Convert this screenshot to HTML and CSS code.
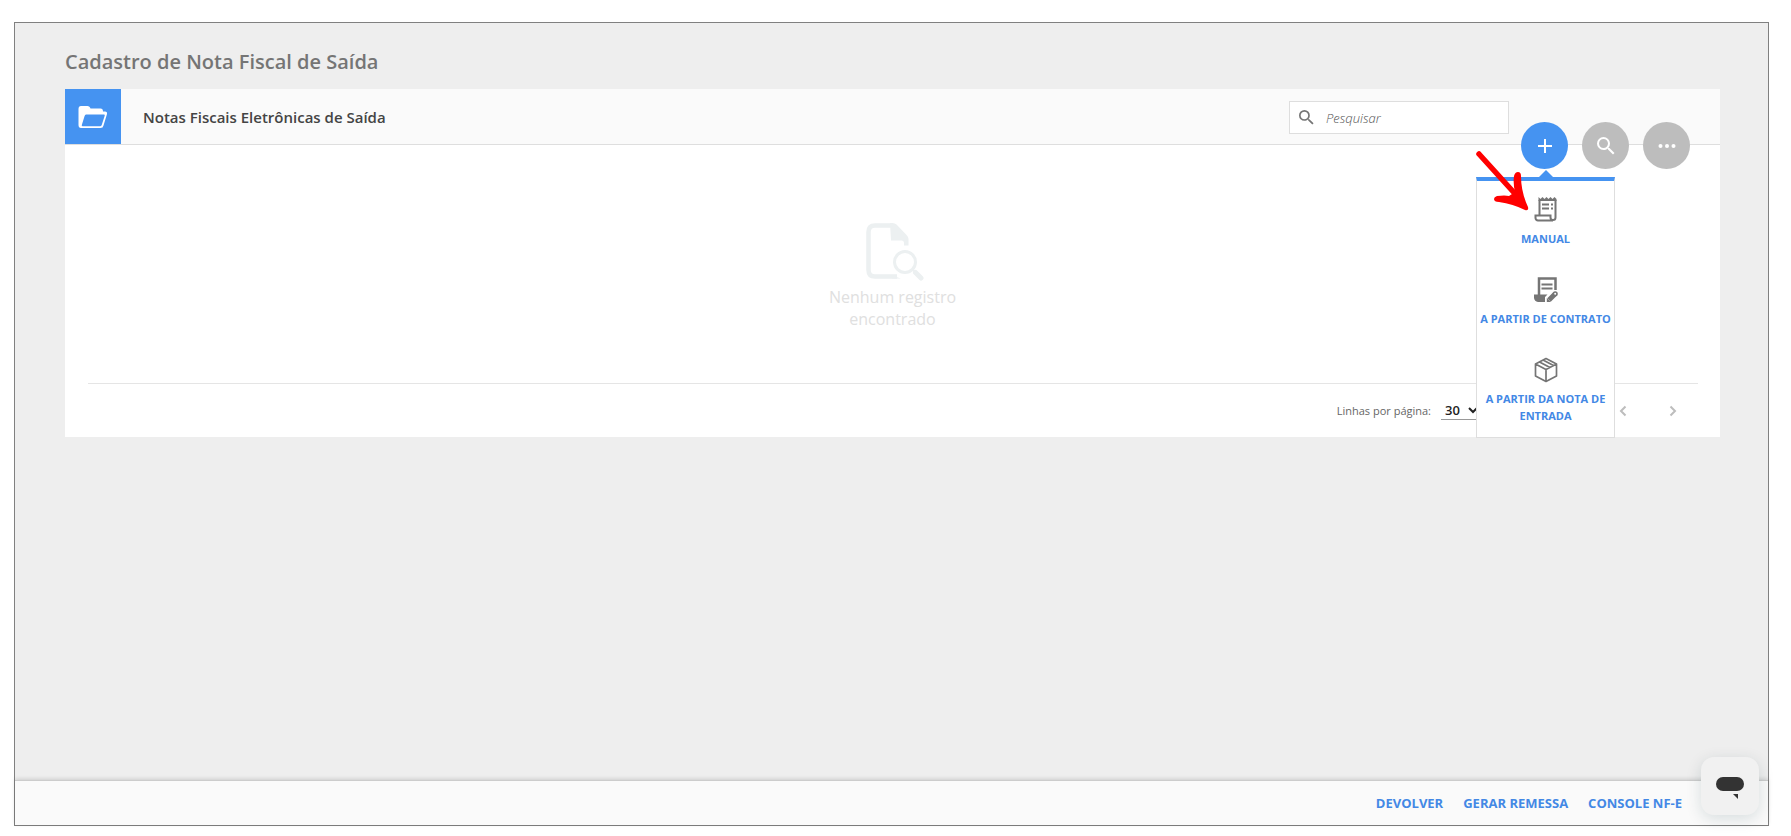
FILE: index.html
```html
<!DOCTYPE html>
<html lang="pt-BR">
<head>
<meta charset="utf-8">
<meta name="viewport" content="width=device-width, initial-scale=1">
<title>Cadastro de Nota Fiscal de Saída</title>
<link rel="stylesheet" href="styles.css">
</head>
<body>
<div class="app">
  <main class="content">
    <h1 class="page-title">Cadastro de Nota Fiscal de Saída</h1>
    <section class="card">
      <header class="card-header">
        <span class="card-icon">
          <svg width="30" height="24" viewBox="0 0 30 24" aria-hidden="true"><path fill="#fff" fill-rule="evenodd" d="M3 1h6.500q2 0 2.500 1.500l.5 1h10q2.500 0 2.500 3h2q2.500 0 2 2.500l-3.500 11.500Q25 23 22.500 23H3q-2.500 0-2.500-3V4Q.5 1 3 1zM8 9.500Q7 9.500 6.600 11L3.800 20q-.3 1.200.8 1.200h17.400q1.300 0 1.700-1.200l3-9.300q.4-1.200-.8-1.200z"/></svg>
        </span>
        <h2 class="card-title">Notas Fiscais Eletrônicas de Saída</h2>
        <div class="search">
          <svg width="15" height="15" viewBox="3 3 18 18" aria-hidden="true"><path fill="#757575" d="M15.500 14h-.79l-.28-.27A6.470 6.470 0 0 0 16 9.500 6.500 6.500 0 1 0 9.500 16c1.610 0 3.090-.59 4.230-1.570l.27.28v.79l5 4.990L20.490 19l-4.990-5zm-6 0C7.010 14 5 11.990 5 9.500S7.010 5 9.500 5 14 7.010 14 9.500 11.990 14 9.500 14z"/></svg>
          <input class="search-input" type="text" placeholder="Pesquisar" aria-label="Pesquisar">
        </div>
      </header>
      <div class="empty">
        <svg width="58" height="58" viewBox="0 0 58 58" aria-hidden="true"><path d="M31 53.500H9q-6.500 0-6.500-6.500V9Q2.500 2.500 9 2.500h17" fill="none" stroke="#ecf0f1" stroke-width="4.500"/><path fill="#ecf0f1" d="M24 0h2.500q2.500 0 4 1.500L40.500 12q2 2 2 4v6.500H38V20q0-2.500-2.500-2.500H25zM27 52q3 2.500 8 3.500h-9z"/><circle cx="39" cy="39" r="10.500" fill="none" stroke="#ecf0f1" stroke-width="3"/><path d="M46.500 46.500l4 4" stroke="#ecf0f1" stroke-width="2"/><path d="M49.500 49.500L55 55" stroke="#ecf0f1" stroke-width="5" stroke-linecap="round"/></svg>
        <p class="empty-text">Nenhum registro encontrado</p>
      </div>
      <footer class="pager">
        <label class="pager-label" for="rows">Linhas por página:</label>
        <select class="pager-select" id="rows"><option>30</option></select>
        <div class="pager-nav">
          <button class="nav-btn" type="button" aria-label="Página anterior"><svg width="8" height="12" viewBox="0 0 8 12"><path d="M6.500 1.500L2 6l4.500 4.500"/></svg></button>
          <button class="nav-btn" type="button" aria-label="Próxima página"><svg width="8" height="12" viewBox="0 0 8 12"><path d="M1.500 1.500L6 6l-4.500 4.500"/></svg></button>
        </div>
      </footer>
      <div class="actions">
        <div class="action-add">
          <button class="round primary" type="button" aria-label="Adicionar"><svg width="16" height="16" viewBox="0 0 16 16"><path d="M8 1v14M1 8h14" stroke="#fff" stroke-width="2"/></svg></button>
          <nav class="menu" aria-label="Adicionar">
            <a class="menu-item" href="#manual">
              <svg width="24" height="26" viewBox="0 0 24 26" aria-hidden="true"><path d="M5.500 18V3M21.500 3v17.500a2.500 2.500 0 0 1-5 0V18.500h-15V21a2.500 2.500 0 0 0 2.500 2.500h15" fill="none" stroke="#757575" stroke-width="2"/><path fill="#757575" d="M4.500 4V0l2 2 2-2 2 2 2-2 2 2 2-2 2 2 2-2 2 2v2zM8 6.500h7v2H8zM17 6.500h2v2h-2zM8 10.500h7v2H8zM17 10.500h2v2h-2z"/></svg>
              <span>MANUAL</span>
            </a>
            <a class="menu-item" href="#contrato">
              <svg width="24" height="26" viewBox="0 0 24 26" aria-hidden="true"><path d="M5 18V1.500h16.500V13" fill="none" stroke="#757575" stroke-width="2.500"/><path fill="#757575" d="M7.500 6.500h11v2h-11zM7.500 10.500h11v2h-11zM0 17.500h13.500L11 20v5H4q-3.500-.5-4-4z"/><path d="M15 23l5.500-5.500" stroke="#757575" stroke-width="5"/><path fill="#757575" d="M12.800 25v-4l4 4z"/><circle cx="21.200" cy="16.800" r="2.600" fill="#757575"/><circle cx="21.200" cy="16.800" r="1" fill="#fff"/></svg>
              <span>A PARTIR DE CONTRATO</span>
            </a>
            <a class="menu-item" href="#entrada">
              <svg width="24" height="26" viewBox="0 0 24 26" aria-hidden="true"><path d="M12 1.500L22.500 7v12L12 24.500 1.500 19V7zM1.500 7L12 12.500 22.500 7M12 12.500v12M5.500 5l10.500 5.500M9 3l10.500 5.500" fill="none" stroke="#757575" stroke-width="1.700" stroke-linejoin="round"/></svg>
              <span>A PARTIR DA NOTA DE ENTRADA</span>
            </a>
          </nav>
          <svg class="arrow" width="56" height="62" viewBox="0 0 56 62" aria-hidden="true"><path d="M3 3L42 46" stroke="#f00" stroke-width="5.500" stroke-linecap="round"/><path fill="#f00" d="M33 45L39 41Q37 33 38 25q1-4 4-4t3 4q0 16 7 31 1 4-3 3-12-6-26-8-5 0-5-3 0-2 3-3 8-1 12 0z"/></svg>
        </div>
        <button class="round" type="button" aria-label="Buscar"><svg width="18" height="18" viewBox="3 3 18 18"><path fill="#fff" d="M15.500 14h-.79l-.28-.27A6.470 6.470 0 0 0 16 9.500 6.500 6.500 0 1 0 9.500 16c1.610 0 3.090-.59 4.230-1.570l.27.28v.79l5 4.990L20.490 19l-4.990-5zm-6 0C7.010 14 5 11.990 5 9.500S7.010 5 9.500 5 14 7.010 14 9.500 11.990 14 9.500 14z"/></svg></button>
        <button class="round" type="button" aria-label="Mais opções"><svg width="18" height="4" viewBox="0 0 18 4" fill="#fff"><circle cx="2.500" cy="2" r="2"/><circle cx="9" cy="2" r="2"/><circle cx="15.500" cy="2" r="2"/></svg></button>
      </div>
    </section>
  </main>
  <footer class="footer">
    <a href="#devolver">DEVOLVER</a>
    <a href="#remessa">GERAR REMESSA</a>
    <a href="#console">CONSOLE NF-E</a>
  </footer>
  <button class="chat" type="button" aria-label="Abrir chat"><svg width="28" height="22" viewBox="0 0 28 22" fill="#333"><rect width="28" height="14" rx="7"/><path d="M17 17h5v5z"/></svg></button>
</div>
</body>
</html>
```
FILE: styles.css
```css
* {
  box-sizing: border-box;
}

body {
  margin: 0;
  padding: 22px 22px 10px 14px;
  min-height: 100vh;
  display: flex;
  background: #fff;
  font-family: "Open Sans", "Noto Sans", sans-serif;
  font-size: 14px;
  color: #333;
}

h1,
h2,
p {
  margin: 0;
}

a {
  text-decoration: none;
  color: #4388e5;
  font-weight: 700;
}

button {
  padding: 0;
  border: 0;
  display: flex;
  align-items: center;
  justify-content: center;
}

.app {
  position: relative;
  flex: 1;
  display: flex;
  flex-direction: column;
  border: 1px solid #808080;
  background: #eee;
}

.content {
  flex: 1;
  padding: 24px 48px 24px 50px;
}

.page-title {
  margin-bottom: 12px;
  font-size: 20px;
  line-height: 30px;
  font-weight: 600;
  color: #757575;
}

.card {
  position: relative;
  background: #fff;
}

.card-header {
  display: flex;
  align-items: center;
  height: 56px;
  padding-right: 211px;
  border-bottom: 1px solid #dedede;
  background: #fafafa;
}

.card-icon {
  display: flex;
  align-items: center;
  justify-content: center;
  align-self: stretch;
  width: 56px;
  background: #4593f1;
}

.card-title {
  flex: 1;
  margin-left: 22px;
  font-size: 15px;
  font-weight: 600;
  color: #444;
}

.search {
  display: flex;
  align-items: center;
  gap: 10px;
  width: 220px;
  height: 33px;
  margin-top: 2px;
  padding-left: 9px;
  border: 1px solid #dedede;
  background: #fff;
}

.search-input {
  flex: 1;
  min-width: 0;
  border: 0;
  outline: 0;
  background: transparent;
  font: italic 300 13px "Open Sans", sans-serif;
}

.search-input::placeholder {
  color: #555;
}

.empty {
  display: flex;
  flex-direction: column;
  align-items: center;
  padding: 78px 0 53px;
}

.empty svg {
  margin-left: 5px;
}

.empty-text {
  width: 150px;
  margin-top: 5px;
  font-size: 16px;
  line-height: 22px;
  text-align: center;
  color: #e0e0e0;
}

.pager {
  display: flex;
  align-items: center;
  justify-content: flex-end;
  height: 54px;
  margin: 0 22px 0 23px;
  border-top: 1px solid #e5e5e5;
}

.pager-label {
  margin-right: 10px;
  font-size: 11px;
  color: #666;
}

.pager-select {
  width: 40px;
  height: 20px;
  margin-bottom: 2px;
  padding: 0 0 2px;
  border: 0;
  border-bottom: 1px solid #999;
  border-radius: 0;
  background: transparent;
  font: 600 13px "Open Sans", sans-serif;
  color: #222;
}

.pager-nav {
  display: flex;
  gap: 26px;
  margin: 0 13px 0 130px;
}

.nav-btn {
  width: 24px;
  height: 24px;
  background: transparent;
}

.nav-btn path {
  fill: none;
  stroke: #bdbdbd;
  stroke-width: 2;
}

.actions {
  position: absolute;
  top: 33px;
  right: 30px;
  display: flex;
  gap: 14px;
}

.action-add {
  position: relative;
}

.round {
  width: 47px;
  height: 47px;
  border-radius: 50%;
  background: #bdbdbd;
}

.primary {
  background: #4593f1;
}

.menu {
  position: absolute;
  top: 55px;
  left: -45px;
  width: 139px;
  height: 261px;
  border: 1px solid #dedede;
  border-top: 4px solid #4593f1;
  background: #fff;
}

.menu::before {
  content: "";
  position: absolute;
  top: -11px;
  left: 62px;
  border: 7px solid transparent;
  border-top: 0;
  border-bottom-color: #4593f1;
}

.menu-item {
  display: flex;
  flex-direction: column;
  align-items: center;
  gap: 7px;
  min-height: 80px;
  padding-top: 16px;
  font-size: 11px;
  line-height: 17px;
  text-align: center;
}

.arrow {
  position: absolute;
  top: 29px;
  left: -45px;
}

.footer {
  display: flex;
  align-items: center;
  justify-content: flex-end;
  gap: 20px;
  height: 45px;
  padding-right: 86px;
  border-top: 1px solid #ccc;
  background: #fafafa;
  box-shadow: 0 -1px 4px rgba(0, 0, 0, 0.15);
  font-size: 13px;
}

.chat {
  position: absolute;
  right: 9px;
  bottom: 10px;
  width: 58px;
  height: 58px;
  border-radius: 13px;
  background: #f1f1f1;
  box-shadow: 0 4px 16px rgba(0, 50, 60, 0.14);
}

.chat svg {
  margin-top: 4px;
}
```
